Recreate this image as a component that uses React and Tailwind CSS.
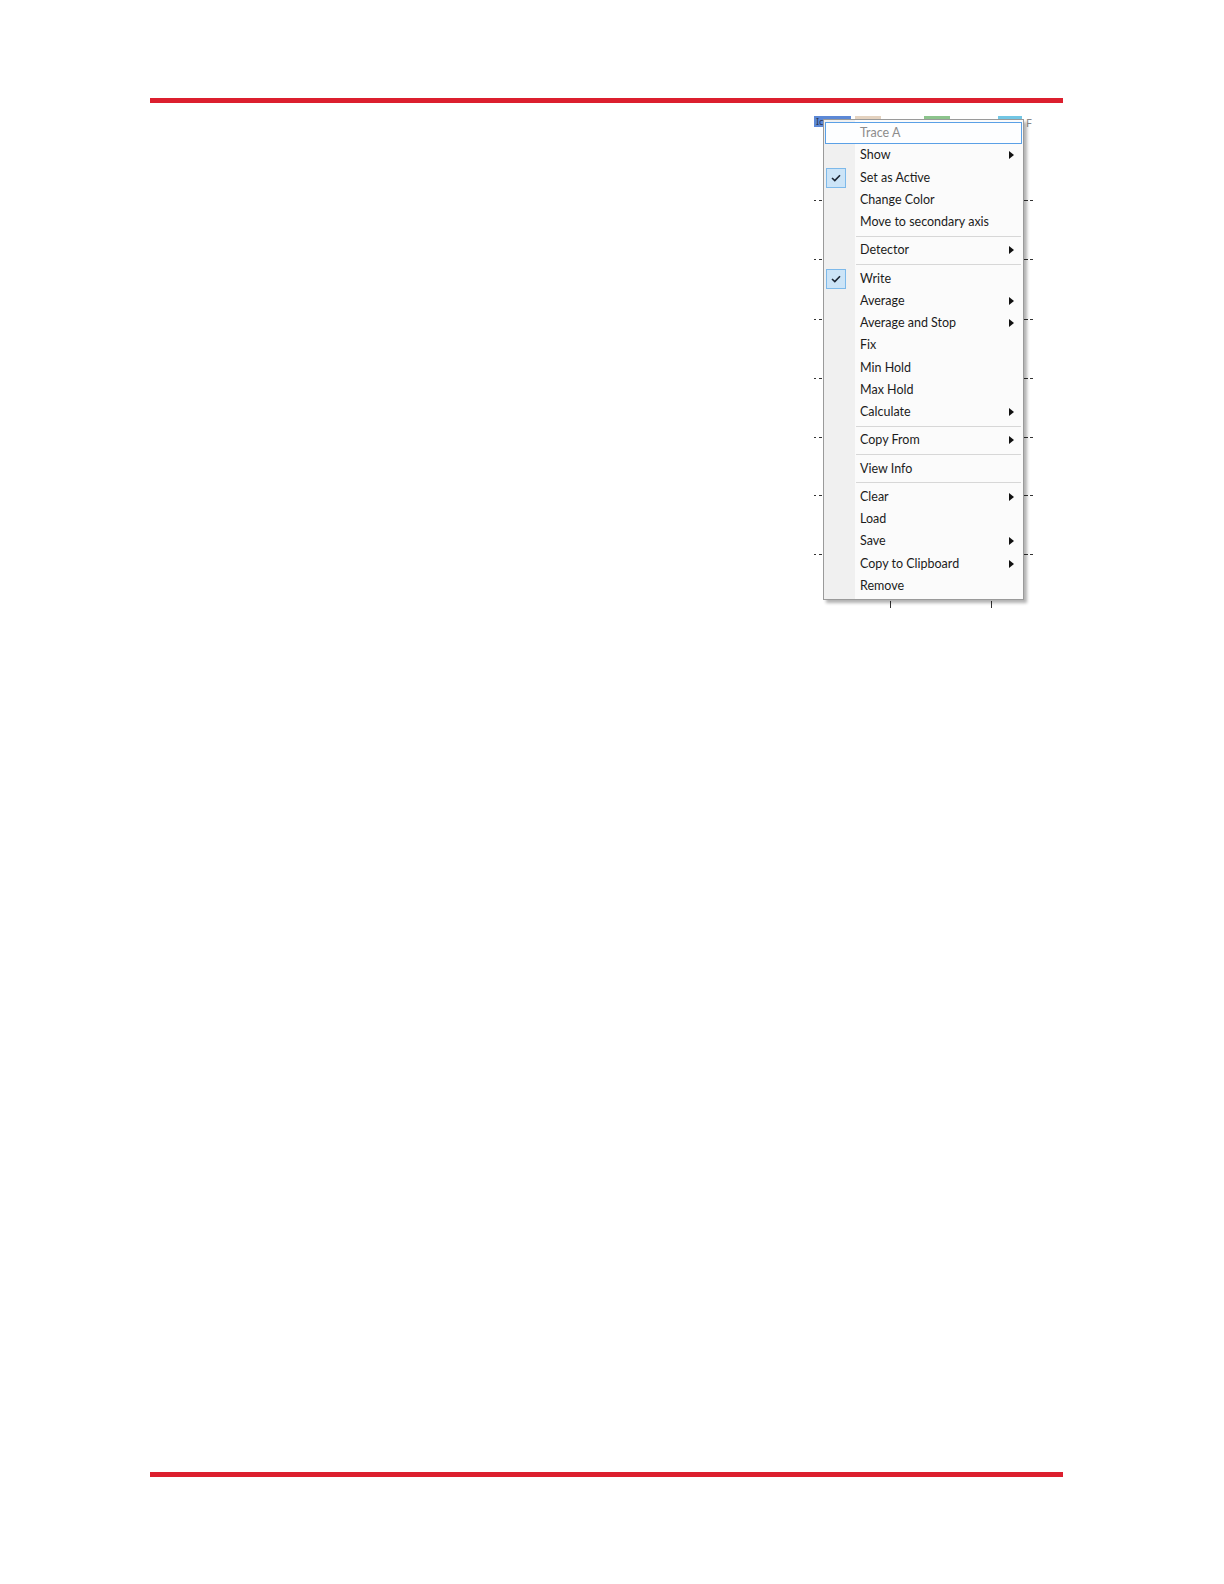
const ITEMS = [
  { label: 'Trace A', disabled: true, focus: true },
  { label: 'Show', sub: true },
  { label: 'Set as Active', checked: true },
  { label: 'Change Color' },
  { label: 'Move to secondary axis' },
  'sep',
  { label: 'Detector', sub: true },
  'sep',
  { label: 'Write', checked: true },
  { label: 'Average', sub: true },
  { label: 'Average and Stop', sub: true },
  { label: 'Fix' },
  { label: 'Min Hold' },
  { label: 'Max Hold' },
  { label: 'Calculate', sub: true },
  'sep',
  { label: 'Copy From', sub: true },
  'sep',
  { label: 'View Info' },
  'sep',
  { label: 'Clear', sub: true },
  { label: 'Load' },
  { label: 'Save', sub: true },
  { label: 'Copy to Clipboard', sub: true },
  { label: 'Remove' },
];

// y positions of the plot's axis ticks, relative to the capture
const TICK_Y = [84, 143, 203, 262, 321, 379, 438];

function Check() {
  return (
    <div className="w-[20px] h-[20px] border border-[#7db9ea] bg-[#cce4f7] flex items-center justify-center">
      <svg width="10" height="8" viewBox="0 0 10 8">
        <path d="M1 4 L3.8 6.6 L9 1.2" fill="none" stroke="#1b2533" strokeWidth="1.6" />
      </svg>
    </div>
  );
}

function Arrow() {
  return (
    <svg width="5" height="8" viewBox="0 0 5 8">
      <path d="M0 0 L5 4 L0 8 Z" fill="#111" />
    </svg>
  );
}

function MenuRow({ item }) {
  return (
    <div className="relative h-[22.25px] flex items-center">
      {item.focus && (
        <div className="absolute left-[1px] top-0 w-[197px] h-[22px] border border-[#5aa0e6] bg-[#fdfeff]" />
      )}
      <div className="relative w-[36px] pl-[2px] flex items-center">{item.checked && <Check />}</div>
      <span
        className={`relative flex-1 text-[12.5px] leading-[22px] whitespace-nowrap ${
          item.disabled ? 'text-[#8c8c8c]' : 'text-[#1c1c1c]'
        }`}
      >
        {item.label}
      </span>
      <div className="w-[14px] flex items-center">{item.sub && <Arrow />}</div>
    </div>
  );
}

function TraceMenu() {
  return (
    <div className="relative ml-[9px] mt-[2px] w-[201px] h-[481px] py-[2px] border border-[#9a9a9a] bg-[linear-gradient(to_right,#f0f0f0_31px,#fbfbfb_31px)] shadow-[3px_3px_3px_rgba(0,0,0,0.3)]">
      {ITEMS.map((it, i) =>
        it === 'sep' ? (
          <div key={i} className="h-[6px] flex items-center pl-[32px] pr-[2px]">
            <div className="h-px w-full bg-[#d7d7d7]" />
          </div>
        ) : (
          <MenuRow key={i} item={it} />
        )
      )}
    </div>
  );
}

function PlotBackdrop() {
  return (
    <svg className="absolute inset-0" width="220" height="494" viewBox="0 0 220 494">
      <rect x="0" y="0" width="37" height="11" fill="#5c88d6" />
      <rect x="41" y="0" width="26" height="4" fill="#e4d2bf" />
      <rect x="110" y="0" width="26" height="4" fill="#8cc48c" />
      <rect x="184" y="0" width="24" height="4" fill="#72c6e4" />
      <text x="2" y="9" fontSize="9" fill="#2a3550" fontFamily="Noto Sans, sans-serif">Ic</text>
      <text x="212" y="11" fontSize="11" fill="#8a8a8a" fontFamily="Noto Sans, sans-serif">F</text>
      {TICK_Y.map((y) => (
        <g key={y} stroke="#333" strokeWidth="1">
          <path d={`M0 ${y + 0.5} h2 M5 ${y + 0.5} h3`} />
          <path d={`M210 ${y + 0.5} h4 M216 ${y + 0.5} h3`} />
        </g>
      ))}
      <path d="M76.5 485 v7 M177.5 485 v7" stroke="#333" strokeWidth="1" />
    </svg>
  );
}

function PlotCapture() {
  return (
    <div
      className="relative w-[220px] h-[494px] ml-[814px] mt-[13px] pt-px"
      style={{ fontFamily: 'Lato, "Noto Sans", sans-serif' }}
    >
      <PlotBackdrop />
      <TraceMenu />
    </div>
  );
}

export default function App() {
  return (
    <div className="w-[1224px] h-[1584px] bg-white pt-[98px] flex flex-col">
      <div className="ml-[150px] w-[913px] h-[5px] bg-[#dc1f2e]" />
      <div className="h-[1369px]">
        <PlotCapture />
      </div>
      <div className="ml-[150px] w-[913px] h-[5px] bg-[#dc1f2e]" />
    </div>
  );
}
